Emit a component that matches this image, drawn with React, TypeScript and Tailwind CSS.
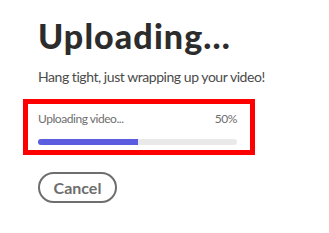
import React from 'react';

export default function App() {
  const progress = 50;

  return (
    <div className="w-[329px] h-[233px] bg-white font-['Lato',sans-serif] pl-[38px] pt-[14px]">
      <h1 className="text-[34px] leading-[44px] font-black tracking-[1.1px] text-[#2c2c2c]">Uploading...</h1>
      <p className="mt-[9px] text-[14px] leading-[20px] tracking-[-0.45px] text-[#4b4b4b]">Hang tight, just wrapping up your video!</p>

      <div className="-ml-[15px] mt-[12px] w-[232px] h-[56px] border-[5px] border-[#ff0000] pl-[10px] pr-[13px] pt-[7px]">
        <div className="flex justify-between text-[12px] leading-[16px] tracking-[-0.45px] text-[#6e6e6e]">
          <span>Uploading video...</span>
          <span>{progress}%</span>
        </div>
        <div className="mt-[12px] h-[6px] rounded-full bg-[#e9e9e9] overflow-hidden">
          <div className="h-full bg-[#5c5ce0]" style={{ width: `${progress}%` }} />
        </div>
      </div>

      <button className="mt-[17px] w-[79px] h-[31px] rounded-full border-2 border-[#6e6e6e] text-[16px] font-bold text-[#6e6e6e]">
        Cancel
      </button>
    </div>
  );
}
